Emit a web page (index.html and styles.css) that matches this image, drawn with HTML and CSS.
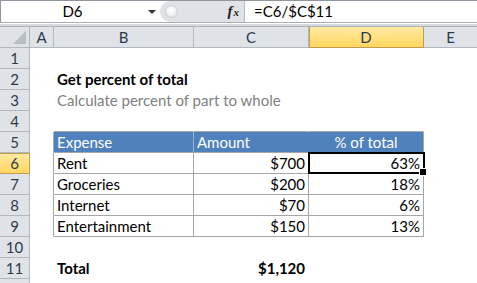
FILE: index.html
```html
<!DOCTYPE html>
<html>
<head>
<meta charset="utf-8">
<link rel="stylesheet" href="styles.css">
</head>
<body>
<div class="fbar">
  <div class="namebox">D6</div>
  <div class="nb-drop"><span class="tri"></span></div>
  <div class="pill">
    <span class="knob"></span>
    <span class="fx"><i>f</i><i class="x">x</i></span>
  </div>
  <div class="formula">=C6/$C$11</div>
</div>
<div class="fgap"></div>

<div class="sheet">
  <!-- column headers -->
  <div class="hd corner"><span class="corner-tri"></span></div>
  <div class="hd col">A</div>
  <div class="hd col">B</div>
  <div class="hd col">C</div>
  <div class="hd col active">D</div>
  <div class="hd col last">E</div>

  <!-- 1 -->
  <div class="hd row">1</div><div class="c"></div><div class="c"></div><div class="c"></div><div class="c"></div><div class="c"></div>
  <!-- 2 -->
  <div class="hd row">2</div><div class="c"></div><div class="c title">Get percent of total</div><div class="c"></div><div class="c"></div><div class="c"></div>
  <!-- 3 -->
  <div class="hd row">3</div><div class="c"></div><div class="c sub">Calculate percent of part to whole</div><div class="c"></div><div class="c"></div><div class="c"></div>
  <!-- 4 -->
  <div class="hd row">4</div><div class="c"></div><div class="c tb-top"></div><div class="c tb-top"></div><div class="c tb-top"></div><div class="c"></div>
  <!-- 5 -->
  <div class="hd row">5</div><div class="c tb-left"></div><div class="c th th-div">Expense</div><div class="c th">Amount</div><div class="c th th-center th-end">% of total</div><div class="c"></div>
  <!-- 6 -->
  <div class="hd row active">6</div><div class="c tb-left"></div><div class="c td">Rent</div><div class="c td num">$700</div><div class="c td num selected">63%</div><div class="c"></div>
  <!-- 7 -->
  <div class="hd row">7</div><div class="c tb-left"></div><div class="c td">Groceries</div><div class="c td num">$200</div><div class="c td num">18%</div><div class="c"></div>
  <!-- 8 -->
  <div class="hd row">8</div><div class="c tb-left"></div><div class="c td">Internet</div><div class="c td num">$70</div><div class="c td num">6%</div><div class="c"></div>
  <!-- 9 -->
  <div class="hd row">9</div><div class="c tb-left"></div><div class="c td">Entertainment</div><div class="c td num">$150</div><div class="c td num">13%</div><div class="c"></div>
  <!-- 10 -->
  <div class="hd row">10</div><div class="c"></div><div class="c"></div><div class="c"></div><div class="c"></div><div class="c"></div>
  <!-- 11 -->
  <div class="hd row">11</div><div class="c"></div><div class="c bold">Total</div><div class="c bold num">$1,120</div><div class="c"></div><div class="c"></div>
  <!-- 12: only its top edge shows -->
  <div class="hd row"></div><div class="c"></div><div class="c"></div><div class="c"></div><div class="c"></div><div class="c"></div>
</div>
</body>
</html>
```

FILE: styles.css
```css
* { box-sizing: border-box; }

html, body {
  margin: 0;
  padding: 0;
  background: #ffffff;
  overflow: hidden;
}

body {
  width: 477px;
  height: 283px;
  font-family: Lato, "Open Sans", sans-serif;
  font-size: 15px;
  color: #000;
}

/* ---------- formula bar ---------- */
.fbar {
  display: flex;
  height: 23px;
  border-top: 1px solid #8f969e;
  border-left: 1px solid #8f969e;
  border-bottom: 1px solid #a9aeb5;
  background: #fff;
}

.namebox {
  width: 143px;
  text-align: center;
  line-height: 21px;
  font-size: 15px;
  color: #000;
}

.nb-drop {
  width: 16px;
  display: flex;
  align-items: center;
  justify-content: center;
}

.tri {
  width: 0;
  height: 0;
  border-left: 4px solid transparent;
  border-right: 4px solid transparent;
  border-top: 4px solid #333;
  margin-top: 1px;
}

.pill {
  width: 85px;
  background: #dfe3e8;
  border-radius: 11px 0 0 11px;
  border-right: 1px solid #b4bac2;
  display: flex;
  align-items: center;
  justify-content: space-between;
  padding: 0 5px 0 4px;
}

.knob {
  width: 13px;
  height: 13px;
  border-radius: 50%;
  background: radial-gradient(circle at 45% 40%, #ffffff 0%, #f1f3f5 45%, #d3d7dc 100%);
  border: 1px solid #cbd0d6;
  margin-left: 1px;
}

.fx {
  font-family: "Liberation Serif", serif;
  font-weight: bold;
  font-size: 15px;
  color: #222;
  line-height: 1;
}

.fx .x {
  font-size: 11px;
  margin-left: 1px;
}

.formula {
  flex: 1;
  padding-left: 9px;
  line-height: 21px;
  font-size: 15px;
}

.fgap {
  height: 3px;
  border-top: 1px solid #fff;
  background: #d6dae0;
}

/* ---------- grid ---------- */
.sheet {
  display: grid;
  grid-template-columns: 30px 24px 140px 115px 115px 1fr;
  grid-auto-rows: 21px;
  border-top: 1px solid #aeb4bc;
}

.sheet > div {
  border-right: 1px solid #fff;
  border-bottom: 1px solid #fff;
  line-height: 20px;
  white-space: nowrap;
  overflow: visible;
  padding: 0 3px;
}

.hd {
  background: #dfe3e8;
  color: #2d3a4c;
  text-align: center;
}

.sheet > .hd {
  border-right: 1px solid #b2b8c0;
  border-bottom: 1px solid #b2b8c0;
}

.sheet > .hd.last { border-right: none; }

.sheet > .hd.active {
  background: linear-gradient(#ffe9a4, #ffd760);
  border-right-color: #c39b4c;
  border-bottom-color: #c39b4c;
  box-shadow: inset 1px 0 0 #c39b4c;
}

.sheet > .hd.row.active {
  box-shadow: inset 0 1px 0 #c39b4c;
}

.corner {
  position: relative;
}

.corner-tri {
  position: absolute;
  right: 3px;
  bottom: 3px;
  width: 0;
  height: 0;
  border-left: 13px solid transparent;
  border-bottom: 13px solid #b8bdc4;
}

.hd.row {
  padding: 0;
}

/* ---------- cell text ---------- */
.title { font-weight: bold; }
.sub { color: #808080; }
.bold { font-weight: bold; }
.num { text-align: right; }

/* ---------- table ---------- */
.sheet > .tb-top { border-bottom-color: #a6a6a6; }
.sheet > .tb-left { border-right-color: #a6a6a6; }

.sheet > .th {
  background: #4f81bd;
  color: #fff;
  border-right-color: #4f81bd;
  border-bottom-color: #a6a6a6;
}

.sheet > .th-div { border-right-color: #9db3d2; }
.sheet > .th-end { border-right-color: #a6a6a6; }
.th-center { text-align: center; }

.sheet > .td {
  border-right-color: #a6a6a6;
  border-bottom-color: #a6a6a6;
}

/* active cell outline with fill handle */
.selected {
  position: relative;
}

.selected::before {
  content: "";
  position: absolute;
  left: -1px;
  top: -1px;
  right: -2px;
  bottom: -1px;
  border: 2px solid #000;
}

.selected::after {
  content: "";
  position: absolute;
  right: -4px;
  bottom: -3px;
  width: 6px;
  height: 6px;
  background: #000;
  border: 1px solid #fff;
}
```
